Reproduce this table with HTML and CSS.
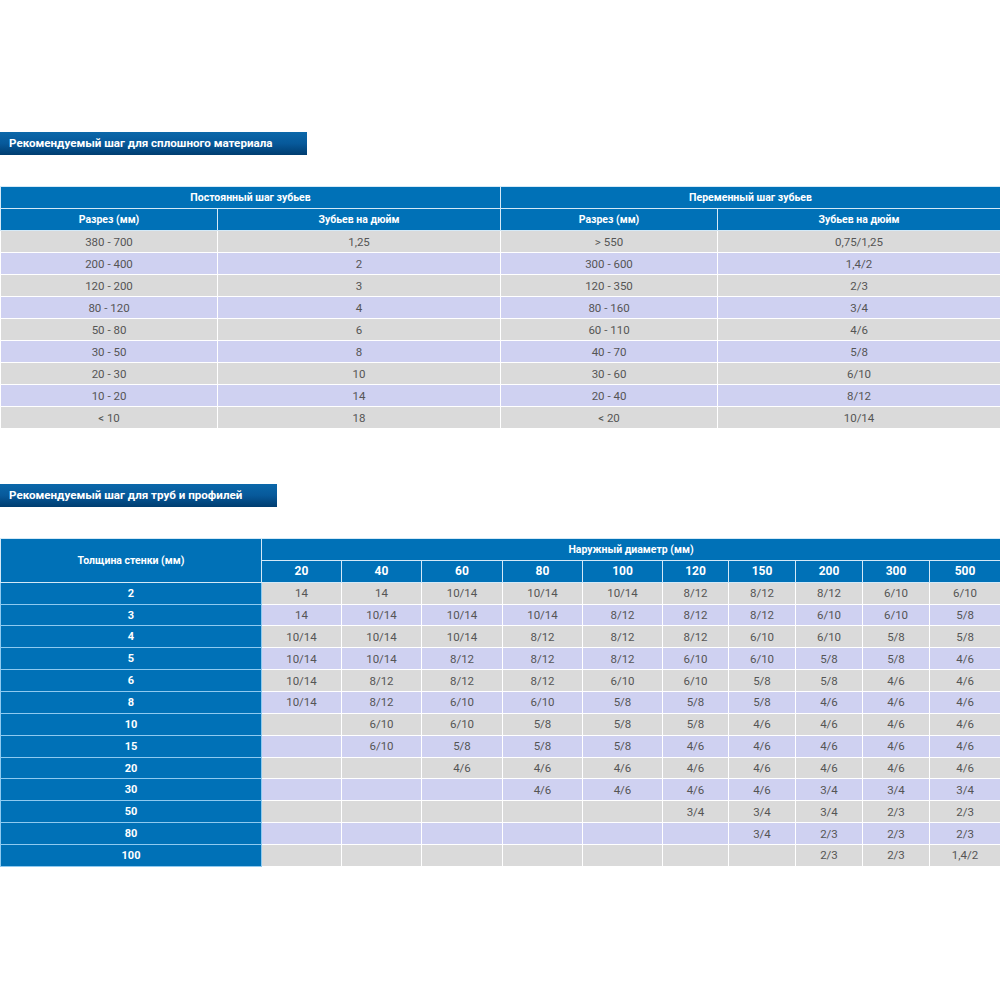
FILE: index.html
```html
<!DOCTYPE html>
<html lang="ru">
<head>
<meta charset="utf-8">
<title>Рекомендуемый шаг</title>
<link rel="stylesheet" href="styles.css">
</head>
<body>
<div class="page">
  <h2 class="title t1">Рекомендуемый шаг для сплошного материала</h2>
  <table class="grid g1">
    <colgroup><col class="c217"><col class="c283"><col class="c217"><col class="c283"></colgroup>
    <thead>
      <tr><th colspan="2">Постоянный шаг зубьев</th><th colspan="2">Переменный шаг зубьев</th></tr>
      <tr><th>Разрез (мм)</th><th>Зубьев на дюйм</th><th>Разрез (мм)</th><th>Зубьев на дюйм</th></tr>
    </thead>
    <tbody>
      <tr><td>380 - 700</td><td>1,25</td><td>&gt; 550</td><td>0,75/1,25</td></tr>
      <tr><td>200 - 400</td><td>2</td><td>300 - 600</td><td>1,4/2</td></tr>
      <tr><td>120 - 200</td><td>3</td><td>120 - 350</td><td>2/3</td></tr>
      <tr><td>80 - 120</td><td>4</td><td>80 - 160</td><td>3/4</td></tr>
      <tr><td>50 - 80</td><td>6</td><td>60 - 110</td><td>4/6</td></tr>
      <tr><td>30 - 50</td><td>8</td><td>40 - 70</td><td>5/8</td></tr>
      <tr><td>20 - 30</td><td>10</td><td>30 - 60</td><td>6/10</td></tr>
      <tr><td>10 - 20</td><td>14</td><td>20 - 40</td><td>8/12</td></tr>
      <tr><td>&lt; 10</td><td>18</td><td>&lt; 20</td><td>10/14</td></tr>
    </tbody>
  </table>

  <h2 class="title t2">Рекомендуемый шаг для труб и профилей</h2>
  <table class="grid g2">
    <colgroup>
      <col class="w261"><col class="w80"><col class="w80"><col class="w81"><col class="w80"><col class="w80">
      <col class="w66"><col class="w67"><col class="w67"><col class="w67"><col class="w71">
    </colgroup>
    <thead>
      <tr><th rowspan="2" class="first">Толщина стенки (мм)</th><th colspan="10">Наружный диаметр (мм)</th></tr>
      <tr class="dia"><th>20</th><th>40</th><th>60</th><th>80</th><th>100</th><th>120</th><th>150</th><th>200</th><th>300</th><th>500</th></tr>
    </thead>
    <tbody>
      <tr><th>2</th><td>14</td><td>14</td><td>10/14</td><td>10/14</td><td>10/14</td><td>8/12</td><td>8/12</td><td>8/12</td><td>6/10</td><td>6/10</td></tr>
      <tr><th>3</th><td>14</td><td>10/14</td><td>10/14</td><td>10/14</td><td>8/12</td><td>8/12</td><td>8/12</td><td>6/10</td><td>6/10</td><td>5/8</td></tr>
      <tr><th>4</th><td>10/14</td><td>10/14</td><td>10/14</td><td>8/12</td><td>8/12</td><td>8/12</td><td>6/10</td><td>6/10</td><td>5/8</td><td>5/8</td></tr>
      <tr><th>5</th><td>10/14</td><td>10/14</td><td>8/12</td><td>8/12</td><td>8/12</td><td>6/10</td><td>6/10</td><td>5/8</td><td>5/8</td><td>4/6</td></tr>
      <tr><th>6</th><td>10/14</td><td>8/12</td><td>8/12</td><td>8/12</td><td>6/10</td><td>6/10</td><td>5/8</td><td>5/8</td><td>4/6</td><td>4/6</td></tr>
      <tr><th>8</th><td>10/14</td><td>8/12</td><td>6/10</td><td>6/10</td><td>5/8</td><td>5/8</td><td>5/8</td><td>4/6</td><td>4/6</td><td>4/6</td></tr>
      <tr><th>10</th><td></td><td>6/10</td><td>6/10</td><td>5/8</td><td>5/8</td><td>5/8</td><td>4/6</td><td>4/6</td><td>4/6</td><td>4/6</td></tr>
      <tr><th>15</th><td></td><td>6/10</td><td>5/8</td><td>5/8</td><td>5/8</td><td>4/6</td><td>4/6</td><td>4/6</td><td>4/6</td><td>4/6</td></tr>
      <tr><th>20</th><td></td><td></td><td>4/6</td><td>4/6</td><td>4/6</td><td>4/6</td><td>4/6</td><td>4/6</td><td>4/6</td><td>4/6</td></tr>
      <tr><th>30</th><td></td><td></td><td></td><td>4/6</td><td>4/6</td><td>4/6</td><td>4/6</td><td>3/4</td><td>3/4</td><td>3/4</td></tr>
      <tr><th>50</th><td></td><td></td><td></td><td></td><td></td><td>3/4</td><td>3/4</td><td>3/4</td><td>2/3</td><td>2/3</td></tr>
      <tr><th>80</th><td></td><td></td><td></td><td></td><td></td><td></td><td>3/4</td><td>2/3</td><td>2/3</td><td>2/3</td></tr>
      <tr><th>100</th><td></td><td></td><td></td><td></td><td></td><td></td><td></td><td>2/3</td><td>2/3</td><td>1,4/2</td></tr>
    </tbody>
  </table>
</div>
</body>
</html>
```

FILE: styles.css
```css
html, body {
  margin: 0;
  padding: 0;
  background: #ffffff;
}

body {
  font-family: Roboto, "Liberation Sans", Arial, sans-serif;
  color: #555555;
}

.page {
  padding-top: 132px;
}

.title {
  margin: 0;
  height: 23px;
  line-height: 23px;
  padding-left: 9px;
  font-size: 11.6px;
  font-weight: 700;
  color: #ffffff;
  background: linear-gradient(to bottom, #0b68aa 0%, #07599a 50%, #003d70 100%);
  box-sizing: border-box;
}

.t1 {
  width: 307px;
  margin-bottom: 31px;
}

.t2 {
  width: 277px;
  margin-bottom: 31px;
}

.grid {
  width: 1000px;
  border-collapse: collapse;
  table-layout: fixed;
  font-size: 11.5px;
}

.g1 {
  margin-bottom: 55px;
}

.grid th,
.grid td {
  height: 21px;
  padding: 0;
  text-align: center;
  vertical-align: middle;
  border: 1px solid #ffffff;
}

.g2 th,
.g2 td {
  height: 20.87px;
}

.grid th {
  background: #0071b7;
  color: #ffffff;
  font-weight: 700;
  font-size: 10.5px;
  border-color: #d4e9f7;
}

.grid tbody tr:nth-child(odd) td {
  background: #dadada;
}

.grid tbody tr:nth-child(even) td {
  background: #cfd1f1;
}

.grid td {
  color: #555555;
}

.g2 tbody th {
  font-size: 11px;
  border-color: #8fcaf0;
}

.g2 .dia th {
  font-size: 12px;
}

.c217 { width: 217px; }
.c283 { width: 283px; }
.w261 { width: 261px; }
.w80 { width: 80px; }
.w81 { width: 81px; }
.w66 { width: 66px; }
.w67 { width: 67px; }
.w71 { width: 71px; }
```
